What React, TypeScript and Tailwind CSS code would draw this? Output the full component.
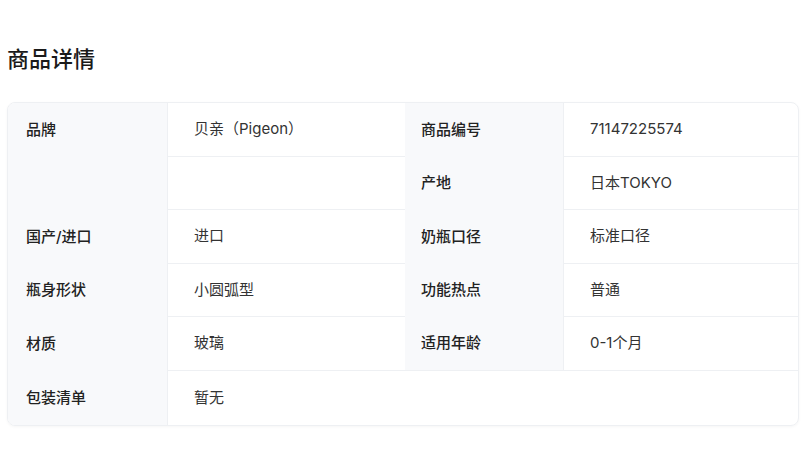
import React from 'react';

interface Row {
  label: string;
  value: string;
  label2?: string;
  value2?: string;
}

const rows: Row[] = [
  { label: '品牌', value: '贝亲（Pigeon）', label2: '商品编号', value2: '71147225574' },
  { label: '', value: '', label2: '产地', value2: '日本TOKYO' },
  { label: '国产/进口', value: '进口', label2: '奶瓶口径', value2: '标准口径' },
  { label: '瓶身形状', value: '小圆弧型', label2: '功能热点', value2: '普通' },
  { label: '材质', value: '玻璃', label2: '适用年龄', value2: '0-1个月' },
  { label: '包装清单', value: '暂无' },
];

export default function App() {
  return (
    <div className="min-h-screen bg-white px-[7px] pt-[44px]" style={{ fontFamily: 'Inter, "Noto Sans CJK SC", sans-serif' }}>
      <h2 className="text-[22px] font-medium leading-[30px] text-[#1a1a1a]">商品详情</h2>

      <div className="mt-[28px] w-[792px] overflow-hidden rounded-[8px] border border-[#eef0f3] shadow-[0_1px_3px_rgba(0,0,0,0.04)]">
        <div className="grid grid-cols-[159px_238px_158px_1fr] text-[15px]">
          {rows.map((r, i) => {
            const last = i === rows.length - 1;
            return (
              <React.Fragment key={i}>
                <div className="flex h-[53.6px] items-center bg-[#f8f9fb] pl-[18px] font-medium text-[#222]">
                  {r.label}
                </div>
                {last ? (
                  <div className="col-span-3 flex h-[53.6px] items-center border-l border-[#eef0f3] pl-[26px] text-[#333]">
                    {r.value}
                  </div>
                ) : (
                  <>
                    <div className="flex h-[53.6px] items-center border-b border-l border-[#eef0f3] pl-[26px] text-[#333]">
                      {r.value}
                    </div>
                    <div className={`flex h-[53.6px] items-center bg-[#f8f9fb] pl-[16px] font-medium text-[#222] ${i === rows.length - 2 ? 'border-b border-[#eef0f3]' : ''}`}>
                      {r.label2}
                    </div>
                    <div className="flex h-[53.6px] items-center border-b border-l border-[#eef0f3] pl-[26px] text-[#333]">
                      {r.value2}
                    </div>
                  </>
                )}
              </React.Fragment>
            );
          })}
        </div>
      </div>
    </div>
  );
}
